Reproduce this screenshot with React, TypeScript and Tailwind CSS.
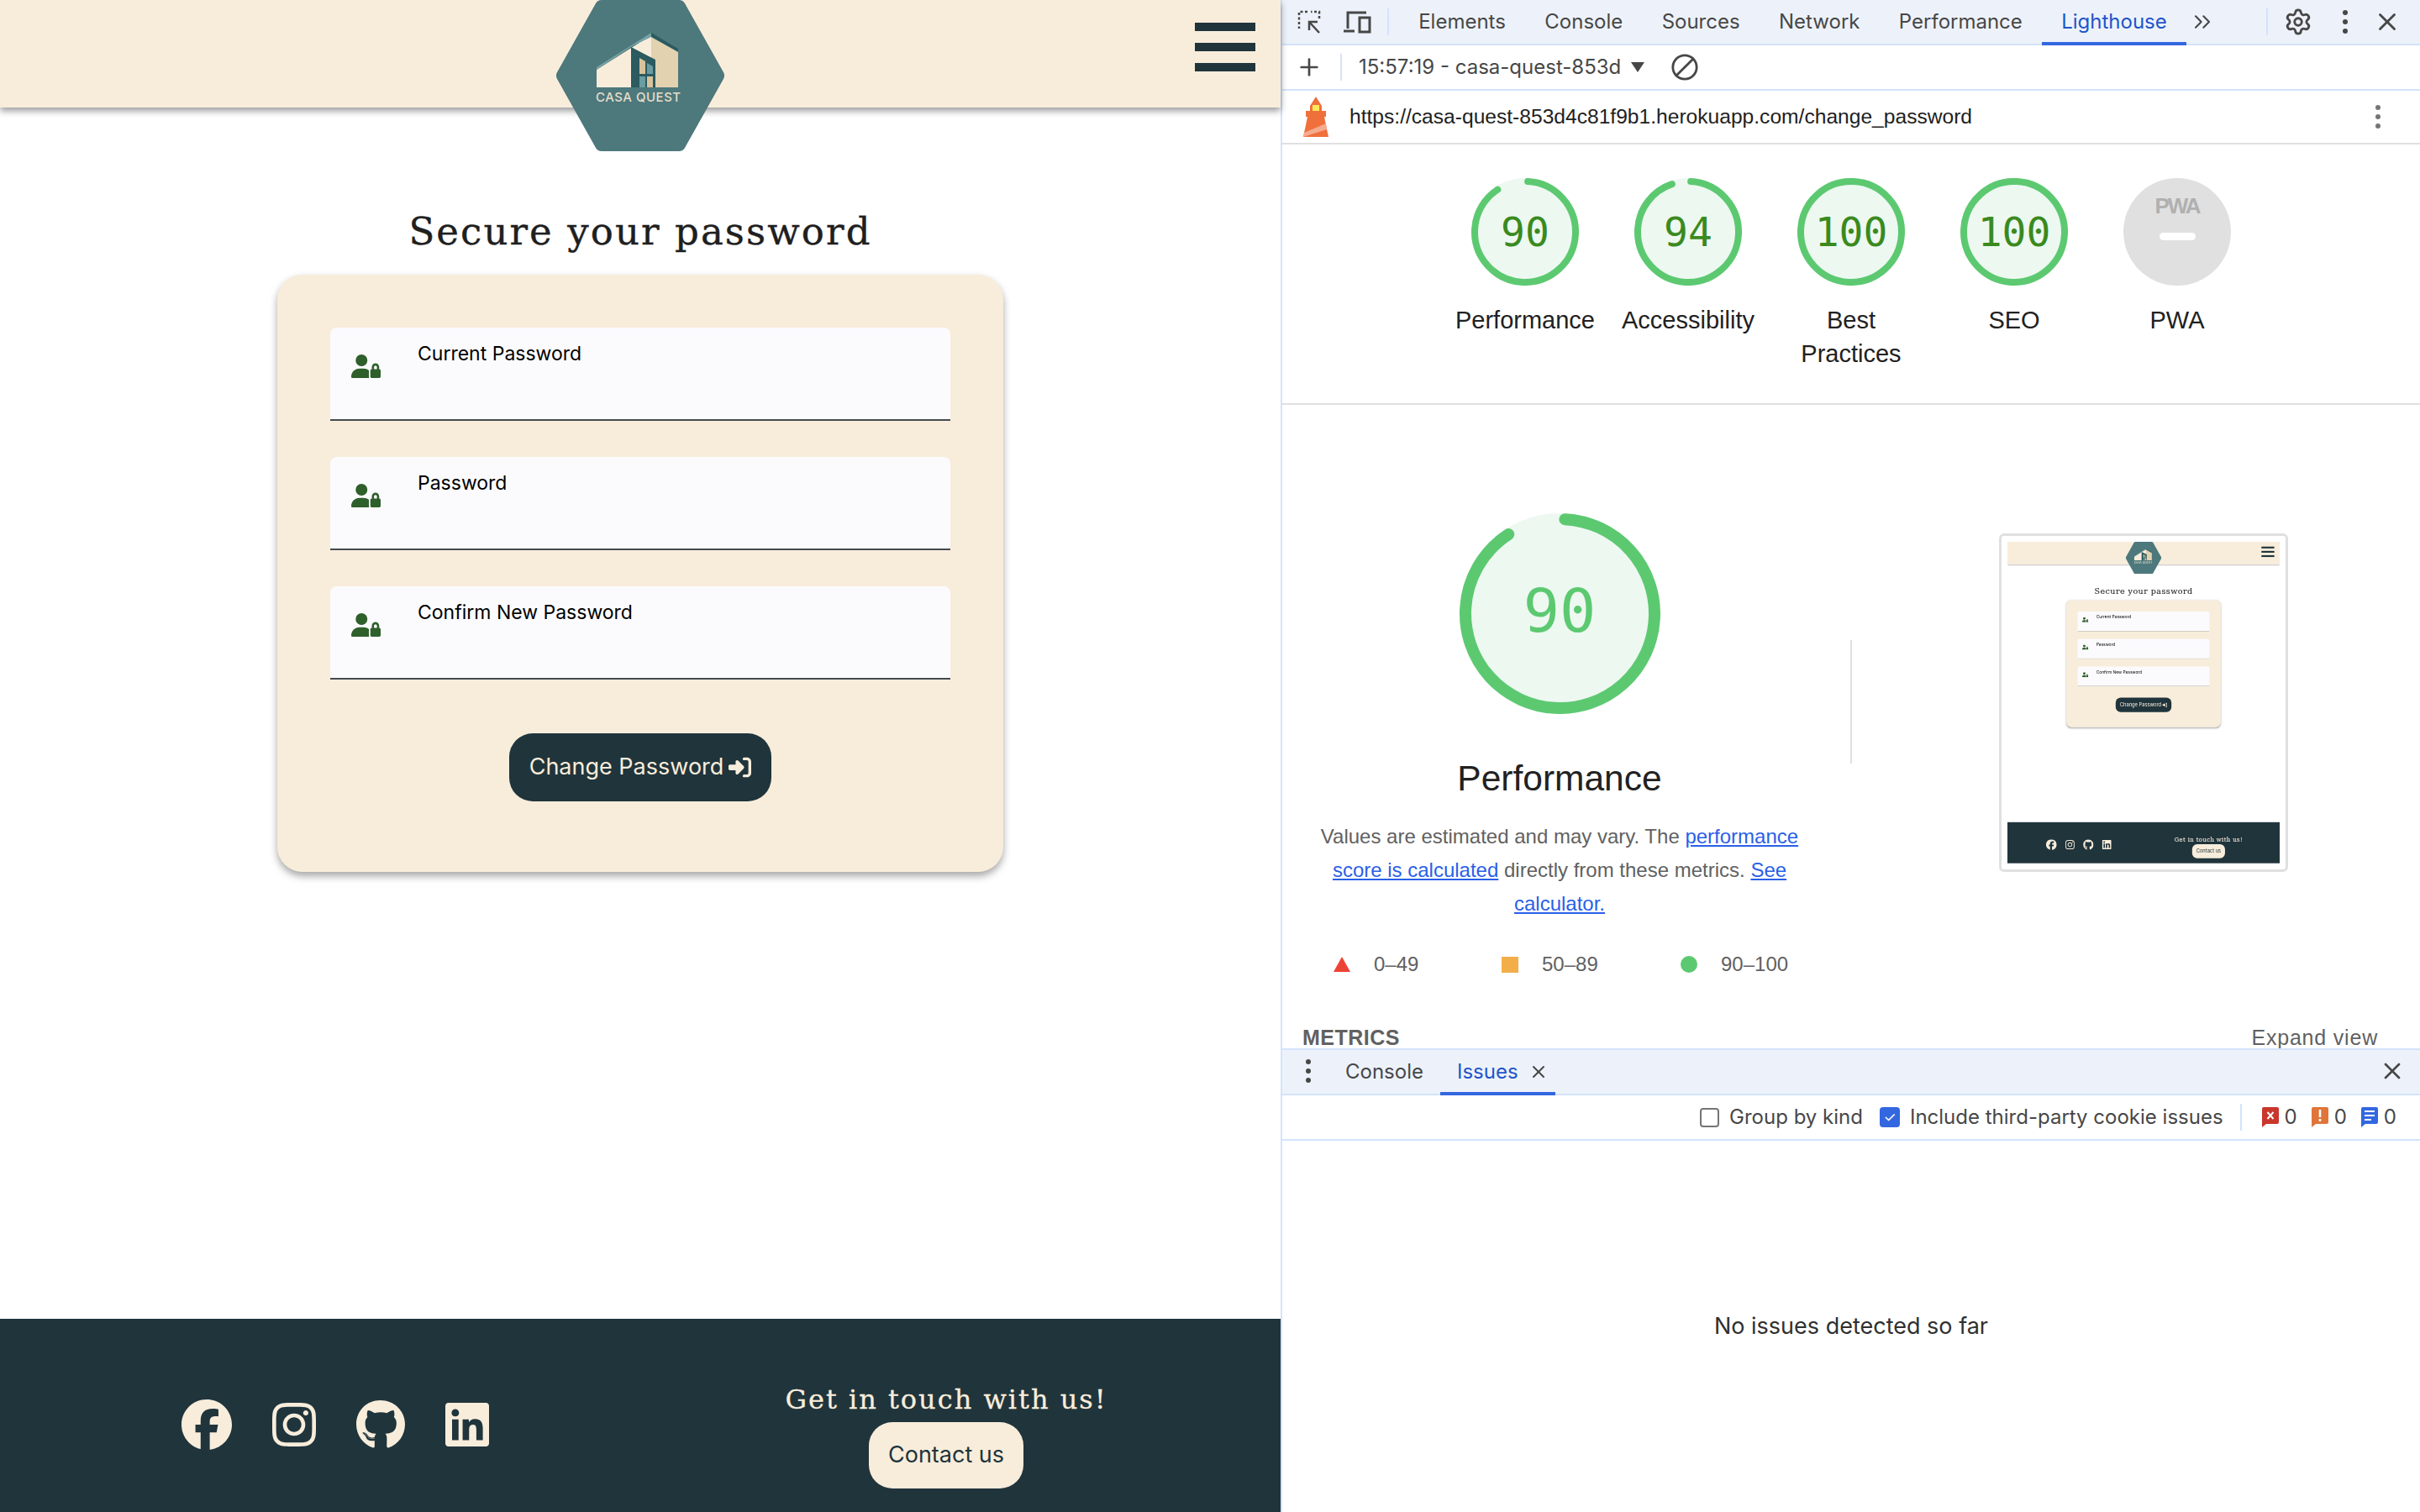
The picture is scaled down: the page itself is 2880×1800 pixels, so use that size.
import { Ban, ChevronsRight, Plus, Settings, X } from "lucide-react";
import { FaFacebook, FaGithub, FaInstagram, FaLinkedin, FaRightToBracket, FaUserLock } from "react-icons/fa6";

const sans = "font-['Inter','Liberation_Sans',sans-serif]";
const helvetica = "font-['Liberation_Sans',Arial,sans-serif]";
const slab = "font-['DejaVu_Serif','Liberation_Serif',serif]";
const mono = "font-['DejaVu_Sans_Mono','Liberation_Mono',monospace]";

function Logo() {
  return (
    <div className="absolute left-[662px] top-0 z-10 h-[180px] w-[200px]">
      <svg viewBox="0 0 200 180" className="h-full w-full">
        <polygon
          points="54,8 146,8 192,90 146,172 54,172 8,90"
          fill="#4d787c"
          stroke="#4d787c"
          strokeWidth="16"
          strokeLinejoin="round"
        />
        <polygon points="48,83 113,42 145,60 145,104 48,104" fill="#f8eddb" />
        <polygon points="113,44 145,62 145,104 113,104" fill="#e2d2b0" />
        <polygon points="48,80 113,39 113,44 90,55 48,83" fill="#75a3a5" />
        <polygon points="113,39 145,58 145,62 113,44" fill="#2b5a60" />
        <polygon points="89,56 118,71 118,104 89,104" fill="#2b5a60" />
        <polygon points="99,69 106,73 106,88 99,88" fill="#d8c39c" />
        <polygon points="108,75 115,79 115,88 108,88" fill="#6a9ca2" />
        <rect x="99" y="91" width="7" height="13" fill="#6a9ca2" />
        <rect x="108" y="91" width="7" height="13" fill="#d8c39c" />
      </svg>
      <span className={`absolute left-[47px] top-[107px] text-[15px] leading-[18px] font-medium tracking-[0.5px] text-[#e6dfcb] ${sans}`}>
        CASA QUEST
      </span>
    </div>
  );
}

function PasswordField({ label }: { label: string }) {
  return (
    <div className="flex h-[111px] w-[738px] rounded-t-lg border-b-2 border-[#444a4e] bg-[#fbfbfe]">
      <FaUserLock className="ml-[25px] mt-[32px] h-[28px] w-[35px] text-[#2f5f2b]" />
      <span className={`ml-[44px] mt-[15px] text-[23px] leading-[32px] text-black ${sans}`}>{label}</span>
    </div>
  );
}

function SitePage() {
  return (
    <div className="relative flex h-[1800px] w-[1524px] flex-col bg-white">
      <header className="flex h-[128px] shrink-0 justify-end bg-[#f8eddb] pr-[30px] pt-[27px] shadow-[0_4px_8px_rgba(0,0,0,0.4)]">
        <div className="flex h-[58px] w-[72px] flex-col justify-between">
          <div className="h-[10px] bg-[#20343c]" />
          <div className="h-[10px] bg-[#20343c]" />
          <div className="h-[10px] bg-[#20343c]" />
        </div>
      </header>
      <Logo />

      <main className="flex flex-1 flex-col items-center">
        <h1 className={`mt-[120px] text-[45px] leading-[56px] tracking-[2.1px] text-[#1f1f1f] [-webkit-text-stroke:0.4px_#1f1f1f] ${slab}`}>
          Secure your password
        </h1>
        <div className="mt-[23px] flex h-[711px] w-[864px] flex-col items-center rounded-[30px] bg-[#f8eddb] pt-[63px] shadow-[0_5px_10px_rgba(0,0,0,0.35)]">
          <div className="flex flex-col gap-[43px]">
            <PasswordField label="Current Password" />
            <PasswordField label="Password" />
            <PasswordField label="Confirm New Password" />
          </div>
          <button className={`mt-[64px] flex h-[81px] w-[312px] items-center justify-center gap-[6px] rounded-[28px] bg-[#20343c] text-[27px] text-[#f8eddb] ${sans}`}>
            Change Password
            <FaRightToBracket className="h-[27px] w-[27px]" />
          </button>
        </div>
      </main>

      <footer className="flex h-[230px] shrink-0 justify-between bg-[#20343c] pl-[216px] pr-[207px] text-[#f8eddb]">
        <div className="flex gap-[48px] pt-[96px]">
          <FaFacebook className="h-[60px] w-[60px]" />
          <FaInstagram className="h-[60px] w-[52px]" />
          <FaGithub className="h-[60px] w-[58px]" />
          <FaLinkedin className="h-[60px] w-[52px]" />
        </div>
        <div className="flex w-[382px] flex-col items-center pt-[76px]">
          <p className={`text-[32px] leading-[40px] tracking-[2px] whitespace-nowrap [-webkit-text-stroke:0.3px_#f8eddb] ${slab}`}>Get in touch with us!</p>
          <button className={`mt-[7px] h-[79px] w-[184px] rounded-[28px] bg-[#f8eddb] text-[27px] text-[#20343c] ${sans}`}>
            Contact us
          </button>
        </div>
      </footer>
    </div>
  );
}

function Dots({ className = "" }: { className?: string }) {
  return (
    <svg viewBox="0 0 8 32" className={`h-[32px] w-[8px] fill-current ${className}`}>
      <circle cx="4" cy="5" r="3" />
      <circle cx="4" cy="16" r="3" />
      <circle cx="4" cy="27" r="3" />
    </svg>
  );
}

function InspectIcon() {
  return (
    <svg viewBox="0 0 28 28" className="h-[28px] w-[28px] text-[#474747]" fill="none" stroke="currentColor" strokeWidth="2.5">
      <path d="M12 2H2V22" strokeDasharray="3 2.5" />
      <path d="M26 10V2H16" strokeDasharray="3 2.5" />
      <path d="M26 27 14 14M14 24V14H24" />
    </svg>
  );
}

function DeviceIcon() {
  return (
    <svg viewBox="0 0 34 28" className="h-[28px] w-[34px] text-[#474747]" fill="none" stroke="currentColor" strokeWidth="3">
      <path d="M6 22V3H28" />
      <path d="M1 25H14" />
      <rect x="20" y="9" width="12" height="17" fill="#edf2fa" />
    </svg>
  );
}

function LighthouseIcon() {
  return (
    <svg viewBox="0 0 30 48" className="h-[48px] w-[30px]">
      <polygon points="15,0 22,11 22,18 8,18 8,11" fill="#f0703c" />
      <rect x="11" y="10" width="8" height="8" fill="#fbe95a" />
      <rect x="3" y="17" width="24" height="7" fill="#f0703c" />
      <polygon points="5,24 25,24 30,48 0,48" fill="#f0703c" />
      <polygon points="1,43 27,32 28,39 0,48" fill="#f6ab8f" />
    </svg>
  );
}

function Gauge({ score, size, stroke, className }: { score: number; size: number; stroke: number; className: string }) {
  const r = (size - stroke) / 2;
  const c = size / 2;
  return (
    <svg viewBox={`0 0 ${size} ${size}`} className={className}>
      <circle cx={c} cy={c} r={r + stroke / 2} fill="#edf8f1" />
      <circle
        cx={c}
        cy={c}
        r={r}
        fill="none"
        stroke="#5cc971"
        strokeWidth={stroke}
        strokeLinecap="round"
        pathLength={100}
        strokeDasharray={`${score} 100`}
        transform={`rotate(-87 ${c} ${c})`}
      />
    </svg>
  );
}

function ScoreItem({ score, label }: { score: number; label: string }) {
  return (
    <div className="flex w-[194px] flex-col items-center">
      <div className="relative flex h-[128px] w-[128px] items-center justify-center">
        <Gauge score={score} size={128} stroke={8} className="absolute inset-0 h-[128px] w-[128px]" />
        <span className={`relative text-[48px] leading-none text-[#3a8a1e] ${mono}`}>{score}</span>
      </div>
      <p className={`mt-[21px] w-[170px] text-center text-[29px] leading-[40px] text-[#212121] ${helvetica}`}>{label}</p>
    </div>
  );
}

function PwaItem() {
  return (
    <div className="flex w-[194px] flex-col items-center">
      <div className="relative flex h-[128px] w-[128px] flex-col items-center rounded-full bg-[#e0e0e0] pt-[18px]">
        <span className={`text-[26px] leading-[30px] font-bold tracking-[-2px] text-[#b0b0b0] ${helvetica}`}>PWA</span>
        <div className="mt-[17px] h-[9px] w-[43px] rounded-full bg-white" />
      </div>
      <p className={`mt-[21px] text-center text-[29px] leading-[40px] text-[#212121] ${helvetica}`}>PWA</p>
    </div>
  );
}

function BigScore() {
  return (
    <div className="flex w-[600px] flex-col items-center">
      <div className="relative flex h-[239px] w-[239px] items-center justify-center pb-[8px]">
        <Gauge score={90} size={239} stroke={14} className="absolute inset-0 h-[239px] w-[239px]" />
        <span className={`relative text-[72px] leading-none text-[#5cc971] ${mono}`}>90</span>
      </div>
      <h2 className={`mt-[52px] text-[42.5px] leading-[50px] text-[#212121] ${helvetica}`}>Performance</h2>
      <p className={`mt-[24px] w-[600px] text-center text-[24px] leading-[40px] text-[#616161] ${helvetica}`}>
        Values are estimated and may vary. The{" "}
        <a className="text-[#2a5fe8] underline">performance score is calculated</a> directly from these metrics.{" "}
        <a className="text-[#2a5fe8] underline">See calculator.</a>
      </p>
      <div className={`mt-[36px] flex w-[560px] items-center pl-[11px] text-[24px] leading-[32px] text-[#616161] ${helvetica}`}>
        <div className="h-0 w-0 border-x-[10px] border-b-[18px] border-x-transparent border-b-[#ed4337]" />
        <span className="ml-[28px] w-[152px]">0–49</span>
        <div className="h-[19px] w-[20px] bg-[#f2ae49]" />
        <span className="ml-[28px] w-[165px]">50–89</span>
        <div className="h-[20px] w-[20px] rounded-full bg-[#5cc971]" />
        <span className="ml-[28px]">90–100</span>
      </div>
    </div>
  );
}

function Thumbnail() {
  return (
    <div className="h-[403px] w-[344px] rounded-[6px] border-[3px] border-[#e0e0e0] bg-white p-[7px]">
      <div className="h-[384px] w-[324px] overflow-hidden blur-[0.4px]">
        <div className="origin-top-left scale-[0.2126]">
          <SitePage />
        </div>
      </div>
    </div>
  );
}

function TopToolbar() {
  const tabs = ["Elements", "Console", "Sources", "Network", "Performance"];
  return (
    <div className={`flex h-[54px] shrink-0 items-stretch border-b-2 border-[#d3e3fd] bg-[#edf2fa] text-[24px] text-[#474747] ${sans}`}>
      <div className="flex items-center gap-[26px] pl-[18px] pr-[19px]">
        <InspectIcon />
        <DeviceIcon />
      </div>
      <div className="my-[10px] w-[2px] bg-[#d3e3fd]" />
      <div className="flex pl-[12px]">
        {tabs.map((tab) => (
          <div key={tab} className="flex items-center px-[23.2px]">
            {tab}
          </div>
        ))}
        <div className="-mb-[2px] flex items-center border-b-[4px] border-[#3367e0] px-[23.2px] pt-[2px] text-[#1f55c9]">
          Lighthouse
        </div>
      </div>
      <ChevronsRight className="ml-[3px] mt-[10px] h-[32px] w-[32px]" strokeWidth={1.6} />
      <div className="my-[10px] ml-[60px] w-[2px] bg-[#d3e3fd]" />
      <Settings className="ml-[19px] mt-[9px] h-[34px] w-[34px]" strokeWidth={2} />
      <Dots className="ml-[35px] mt-[10px]" />
      <X className="ml-[29px] mt-[9px] h-[34px] w-[34px]" strokeWidth={2} />
    </div>
  );
}

function ReportBar() {
  return (
    <div className={`flex h-[54px] shrink-0 items-center border-b-2 border-[#d3e3fd] bg-white text-[24px] text-[#474747] ${sans}`}>
      <Plus className="ml-[16px] h-[32px] w-[32px]" strokeWidth={2} />
      <div className="ml-[21px] h-[32px] w-[2px] bg-[#d3e3fd]" />
      <span className="ml-[20px] w-[319px] whitespace-nowrap">15:57:19 - casa-quest-853d</span>
      <div className="ml-[5px] h-0 w-0 border-x-[8px] border-t-[12px] border-x-transparent border-t-[#474747]" />
      <Ban className="ml-[31px] h-[34px] w-[34px] -scale-x-100" strokeWidth={2} />
    </div>
  );
}

function UrlBar() {
  return (
    <div className="flex h-[64px] shrink-0 items-center border-b-2 border-[#e0e0e0] bg-white pl-[25px] pr-[46px]">
      <LighthouseIcon />
      <span className={`ml-[25px] flex-1 pt-[1px] text-[24.6px] text-[#212121] ${helvetica}`}>
        https://casa-quest-853d4c81f9b1.herokuapp.com/change_password
      </span>
      <Dots className="text-[#757575]" />
    </div>
  );
}

function IssueCount({ color, glyph }: { color: string; glyph: "x" | "!" | "lines" }) {
  return (
    <div className="flex items-center gap-[7px]">
      <svg viewBox="0 0 20 24" className={`h-[24px] w-[20px] ${color}`}>
        <path d="M2 0H18A2 2 0 0 1 20 2V18A2 2 0 0 1 18 20H5L0 24V2A2 2 0 0 1 2 0Z" fill="currentColor" />
        {glyph === "x" && <path d="M6.5 6 13.5 14M13.5 6 6.5 14" stroke="white" strokeWidth="2" />}
        {glyph === "!" && <path d="M10 3V12M10 14V17" stroke="white" strokeWidth="2.6" />}
        {glyph === "lines" && <path d="M4 5H16M4 10H16M4 15H12" stroke="white" strokeWidth="2" />}
      </svg>
      <span>0</span>
    </div>
  );
}

function Drawer() {
  return (
    <div className={`flex flex-1 flex-col text-[24px] text-[#474747] ${sans}`}>
      <div className="flex h-[56px] shrink-0 items-stretch border-y-2 border-[#d3e3fd] bg-[#edf2fa]">
        <Dots className="ml-[27px] mt-[9px]" />
        <div className="ml-[40px] flex items-center">Console</div>
        <div className="-mb-[2px] ml-[20px] flex items-center gap-[12px] border-b-[4px] border-[#3367e0] pl-[20px] pr-[8px] pt-[2px] text-[#1f55c9]">
          Issues
          <X className="h-[24px] w-[24px] text-[#474747]" strokeWidth={2} />
        </div>
        <X className="ml-auto mr-[17px] mt-[9px] h-[32px] w-[32px]" strokeWidth={2} />
      </div>
      <div className="flex h-[54px] shrink-0 items-center justify-end border-b-2 border-[#d3e3fd] pr-[28px]">
        <div className="h-[23px] w-[23px] rounded-[4px] border-2 border-[#757575]" />
        <span className="ml-[12px]">Group by kind</span>
        <div className="ml-[20px] flex h-[24px] w-[24px] items-center justify-center rounded-[4px] bg-[#3367e0] text-[17px] leading-none text-white">
          ✓
        </div>
        <span className="ml-[12px]">Include third-party cookie issues</span>
        <div className="ml-[20px] h-[32px] w-[2px] bg-[#d3e3fd]" />
        <div className="ml-[24px] flex gap-[17px]">
          <IssueCount color="text-[#c9372c]" glyph="x" />
          <IssueCount color="text-[#e0753a]" glyph="!" />
          <IssueCount color="text-[#3367e0]" glyph="lines" />
        </div>
      </div>
      <div className="flex flex-1 items-center justify-center bg-white text-[27px] text-[#303030]">
        No issues detected so far
      </div>
    </div>
  );
}

function Report() {
  return (
    <div className="h-[1076px] shrink-0 overflow-hidden bg-white">
      <div className="flex h-[310px] items-start border-b-2 border-[#e0e0e0] pl-[192px] pt-[40px]">
        <ScoreItem score={90} label="Performance" />
        <ScoreItem score={94} label="Accessibility" />
        <ScoreItem score={100} label="Best Practices" />
        <ScoreItem score={100} label="SEO" />
        <PwaItem />
      </div>
      <div className="flex h-[740px] items-start pl-[30px] pt-[129px]">
        <BigScore />
        <div className="ml-[46px] mt-[151px] h-[147px] w-[2px] bg-[#e0e0e0]" />
        <div className="ml-[175px] mt-[24px]">
          <Thumbnail />
        </div>
      </div>
      <div className={`flex h-[26px] items-center justify-between pl-[24px] pr-[50px] text-[25px] leading-[26px] text-[#616161] ${helvetica}`}>
        <span className="font-bold tracking-[0.5px]">METRICS</span>
        <span className="tracking-[0.8px]">Expand view</span>
      </div>
    </div>
  );
}

export default function App() {
  return (
    <div className="flex h-[1800px] w-[2880px] overflow-hidden bg-white">
      <SitePage />
      <div className="flex h-full flex-1 flex-col border-l-2 border-[#d3e3fd]">
        <TopToolbar />
        <ReportBar />
        <UrlBar />
        <Report />
        <Drawer />
      </div>
    </div>
  );
}
